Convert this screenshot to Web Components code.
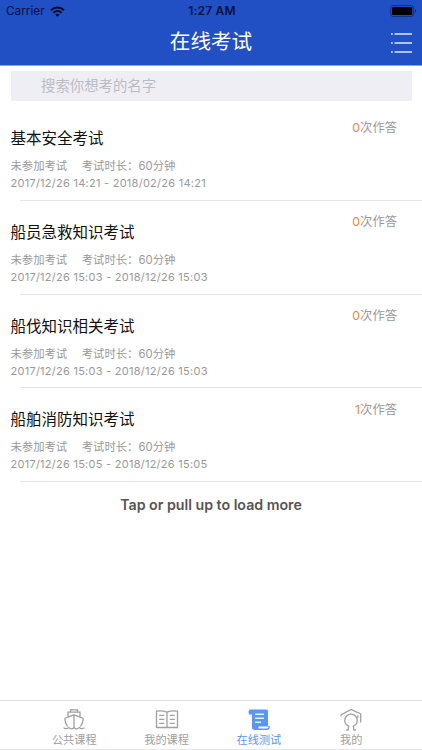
<!DOCTYPE html>
<html lang="zh-CN">
<head>
<meta charset="UTF-8">
<title>在线考试</title>
<style>
    html, body{
        margin:0;
        height:100%;
    }
    body{
        background:#fff;
        font-family:Inter, "Noto Sans CJK SC", sans-serif;
        overflow:hidden;
    }
</style>
</head>
<body>
<exam-app></exam-app>
<script>
class StatusBar extends HTMLElement {
    constructor() {
        super();
        this.attachShadow({ mode: 'open' });
    }

    static get styles() {
        return /*css*/`
        :host{
            display:grid;
            grid-template-columns:1fr auto 1fr;
            align-items:center;
            height:22px;
            padding:0 5px 0 7px;
            color:#07103a;
            font-size:12px;
            line-height:22px;
        }
        .carrier{
            display:flex;
            align-items:center;
            gap:5px;
            margin-left:-1px;
        }
        .carrier span{
            font-size:11.8px;
        }
        .time{
            font-weight:600;
            letter-spacing:.2px;
        }
        .battery{
            justify-self:end;
        }
        svg{
            display:block;
        }
        `;
    }

    connectedCallback() {
        this.render();
    }

    render() {
        this.shadowRoot.innerHTML =/*html*/`
        <style>${StatusBar.styles}</style>
        <div class="carrier">
            <span>Carrier</span>
            <svg width="15" height="11" viewBox="0 0 15 11" fill="none" stroke="#050a22" stroke-width="2">
                <path d="M1 4.2C4.7.6 10.3.6 14 4.2"/>
                <path d="M3.4 6.7c2.4-2.2 5.8-2.2 8.2 0"/>
                <path d="M7.5 10.8L5.3 8.6c1.3-1.1 3.1-1.1 4.4 0z" fill="#050a22" stroke="none"/>
            </svg>
        </div>
        <span class="time">1:27 AM</span>
        <svg class="battery" width="27" height="12" viewBox="0 0 27 12">
            <rect x=".6" y=".6" width="23" height="10.8" rx="2.4" fill="none" stroke="#142f7c"/>
            <rect x="2" y="2" width="20.2" height="8" rx="1" fill="#000"/>
            <path d="M25 4c1.6.6 1.6 3.4 0 4z" fill="#142f7c"/>
        </svg>
    `;
    }
}
customElements.define('status-bar', StatusBar);

class NavHeader extends HTMLElement {
    constructor() {
        super();
        this.attachShadow({ mode: 'open' });
    }

    static get styles() {
        return /*css*/`
        :host{
            display:block;
            box-sizing:border-box;
            height:66px;
            background:#2050c4;
            border-bottom:1px solid #86a2e8;
        }
        .bar{
            display:grid;
            grid-template-columns:1fr auto 1fr;
            height:43px;
            padding:0 10px;
        }
        .title{
            grid-column:2;
            color:#fff;
            font-size:20.6px;
            font-weight:400;
            line-height:39px;
            margin:0;
        }
        svg{
            display:block;
            justify-self:end;
            margin-top:10px;
        }
        `;
    }

    connectedCallback() {
        this.render();
    }

    render() {
        this.shadowRoot.innerHTML =/*html*/`
        <style>${NavHeader.styles}</style>
        <status-bar></status-bar>
        <div class="bar">
            <h1 class="title"><slot></slot></h1>
            <svg width="22" height="22" viewBox="0 0 22 22" stroke="#dfe7fb" stroke-width="1.5">
                <path d="M1 2h1.8M4.500 2H22M1 10.900h1.800M4.500 10.900H22M1 20h1.800M4.500 20H22"/>
            </svg>
        </div>
    `;
    }
}
customElements.define('nav-header', NavHeader);

class SearchBox extends HTMLElement {
    constructor() {
        super();
        this.attachShadow({ mode: 'open' });
    }

    static get styles() {
        return /*css*/`
        :host{
            display:block;
            margin:5px 10px 0 11px;
            height:30px;
            padding-left:30px;
            background:#eeeef4;
            color:#bcbcc4;
            font-size:14.4px;
            line-height:29px;
        }
        `;
    }

    connectedCallback() {
        this.render();
    }

    render() {
        this.shadowRoot.innerHTML =/*html*/`
        <style>${SearchBox.styles}</style>
        <slot></slot>
    `;
    }
}
customElements.define('search-box', SearchBox);

class ExamItem extends HTMLElement {
    constructor() {
        super();
        this.attachShadow({ mode: 'open' });
    }

    static get styles() {
        return /*css*/`
        :host{
            display:flex;
            flex-direction:column;
            height:93.75px;
        }
        .content{
            flex:1;
            display:flex;
            justify-content:space-between;
            padding:0 25px 0 10.5px;
        }
        .title{
            margin:21px 0 0;
            color:#111;
            font-size:15.5px;
            font-weight:400;
            line-height:22px;
        }
        .meta, .date{
            color:#999;
            font-size:11.35px;
            line-height:17px;
        }
        .meta{
            display:flex;
            gap:14.5px;
            margin-top:8px;
        }
        .date{
            font-size:11px;
            letter-spacing:.26px;
        }
        .count{
            margin-top:11.4px;
            color:#999;
            font-size:12.3px;
            line-height:20px;
        }
        b{
            color:#f08a24;
            font-weight:400;
        }
        .line{
            height:1px;
            margin-left:20px;
            background:#e4e4e4;
        }
        `;
    }

    connectedCallback() {
        this.render();
    }

    render() {
        this.shadowRoot.innerHTML =/*html*/`
        <style>${ExamItem.styles}</style>
        <div class="content">
            <div>
                <h2 class="title"><slot></slot></h2>
                <div class="meta"><span>未参加考试</span><span>考试时长：60分钟</span></div>
                <div class="date">${this.getAttribute('date')}</div>
            </div>
            <div class="count"><b>${this.getAttribute('count')}</b>次作答</div>
        </div>
        <div class="line"></div>
    `;
    }
}
customElements.define('exam-item', ExamItem);

class TabItem extends HTMLElement {
    constructor() {
        super();
        this.attachShadow({ mode: 'open' });
    }

    static get styles() {
        return /*css*/`
        :host{
            display:flex;
            flex-direction:column;
            align-items:center;
            width:92.3px;
            padding-top:7px;
            color:#a0a0a0;
            font-size:11.2px;
            line-height:16px;
        }
        :host([active]){
            color:#5b96f7;
        }
        svg{
            display:block;
            width:24px;
            height:24px;
            fill:none;
            stroke:currentColor;
            stroke-width:1.3;
        }
        `;
    }

    static get icons() {
        return {
            ship: `<path d="M8.5 4V1.8h7V4M6 8.500V4.200h12v4.300M12 6v14M2.500 10.500L12 6.800l9.500 3.700M2.800 10.700c0 3 1.200 5.600 2.700 7.800M21.200 10.700c0 3-1.200 5.600-2.700 7.800"/>
                <path d="M1.500 19.800c2.200 1.200 3.800 1 5.300-.4 1.600 2 3.600 2 5.200.2 1.600 1.800 3.600 1.800 5.200-.2 1.500 1.400 3.100 1.600 5.300.4"/>`,
            book: `<path d="M12 4.200C9 2.800 5.200 2.600 1.500 3.200v16.300h21V3.200C18.800 2.600 15 2.800 12 4.200v15.300"/>
                <path d="M4.200 7.300h5M4.200 11.300h5M4.200 15.300h5M14.800 7.300h5M14.800 11.300h5M14.800 15.300h5"/>`,
            scroll: `<path d="M3.500 1.500h15.500c1.500 0 2 1 2 2v14.500h1.800c0 3-1 4-2.800 4H7.500c-1.700 0-2.500-1-2.500-2.500V6.500H2c-.8-2.500-.5-5 1.500-5z" fill="currentColor" stroke="none"/>
                <path d="M8 6.200h9M8 10.200h9M8 14.200h6" stroke="#e5efff" stroke-width="1.5"/>
                <path d="M11.500 18.600h10c0 1.200-.6 1.900-1.600 1.900h-8.400z" fill="#fff" stroke="none"/>`,
            user: `<path d="M2 8.300v-1.300L12 1.500l9.700 4.300v8.700"/>
                <path d="M18.800 7.200v2.500"/>
                <path d="M9 22.500l.7-4.300c-2.300-1-3.900-3.200-3.900-5.800a6.200 6.200 0 0 1 12.400 0c0 2.600-1.600 4.800-3.900 5.800l.7 4.300"/>
                <path d="M7 21.900h2.200M14.800 21.900H17"/>`
        };
    }

    connectedCallback() {
        this.render();
    }

    render() {
        this.shadowRoot.innerHTML =/*html*/`
        <style>${TabItem.styles}</style>
        <svg viewBox="0 0 24 24">${TabItem.icons[this.getAttribute('icon')]}</svg>
        <span><slot></slot></span>
    `;
    }
}
customElements.define('tab-item', TabItem);

class TabBar extends HTMLElement {
    constructor() {
        super();
        this.attachShadow({ mode: 'open' });
    }

    static get styles() {
        return /*css*/`
        :host{
            display:flex;
            justify-content:center;
            box-sizing:border-box;
            height:50px;
            padding-left:3.5px;
            border-top:1px solid #dedede;
            border-bottom:1px solid #e6e6e6;
        }
        `;
    }

    connectedCallback() {
        this.render();
    }

    render() {
        this.shadowRoot.innerHTML =/*html*/`
        <style>${TabBar.styles}</style>
        <slot></slot>
    `;
    }
}
customElements.define('tab-bar', TabBar);

class ExamApp extends HTMLElement {
    constructor() {
        super();
        this.attachShadow({ mode: 'open' });
    }

    static get styles() {
        return /*css*/`
        :host{
            display:flex;
            flex-direction:column;
            height:100vh;
        }
        main{
            flex:1;
            padding-top:6px;
        }
        .more{
            color:#555;
            font-size:14.2px;
            font-weight:600;
            line-height:20px;
            text-align:center;
            margin-top:12.5px;
        }
        `;
    }

    connectedCallback() {
        this.render();
    }

    render() {
        this.shadowRoot.innerHTML =/*html*/`
        <style>${ExamApp.styles}</style>
        <nav-header>在线考试</nav-header>
        <search-box>搜索你想考的名字</search-box>
        <main>
            <exam-item date="2017/12/26 14:21 - 2018/02/26 14:21" count="0">基本安全考试</exam-item>
            <exam-item date="2017/12/26 15:03 - 2018/12/26 15:03" count="0">船员急救知识考试</exam-item>
            <exam-item date="2017/12/26 15:03 - 2018/12/26 15:03" count="0">船伐知识相关考试</exam-item>
            <exam-item date="2017/12/26 15:05 - 2018/12/26 15:05" count="1">船舶消防知识考试</exam-item>
            <div class="more">Tap or pull up to load more</div>
        </main>
        <tab-bar>
            <tab-item icon="ship">公共课程</tab-item>
            <tab-item icon="book">我的课程</tab-item>
            <tab-item icon="scroll" active>在线测试</tab-item>
            <tab-item icon="user">我的</tab-item>
        </tab-bar>
    `;
    }
}
customElements.define('exam-app', ExamApp);
</script>
</body>
</html>
